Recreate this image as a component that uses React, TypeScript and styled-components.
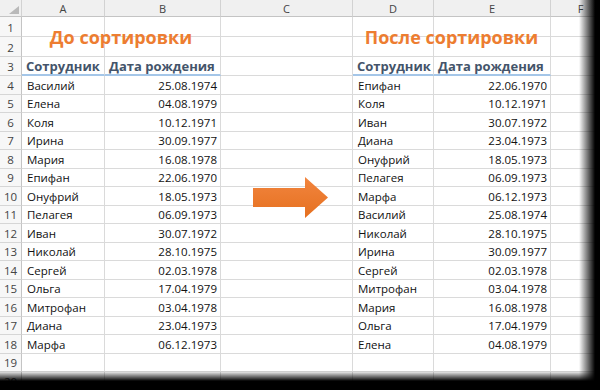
import styled, { createGlobalStyle } from 'styled-components'

type Row = { name: string; date: string }

const before: Row[] = [
  { name: 'Василий', date: '25.08.1974' },
  { name: 'Елена', date: '04.08.1979' },
  { name: 'Коля', date: '10.12.1971' },
  { name: 'Ирина', date: '30.09.1977' },
  { name: 'Мария', date: '16.08.1978' },
  { name: 'Епифан', date: '22.06.1970' },
  { name: 'Онуфрий', date: '18.05.1973' },
  { name: 'Пелагея', date: '06.09.1973' },
  { name: 'Иван', date: '30.07.1972' },
  { name: 'Николай', date: '28.10.1975' },
  { name: 'Сергей', date: '02.03.1978' },
  { name: 'Ольга', date: '17.04.1979' },
  { name: 'Митрофан', date: '03.04.1978' },
  { name: 'Диана', date: '23.04.1973' },
  { name: 'Марфа', date: '06.12.1973' },
]

const after: Row[] = [
  { name: 'Епифан', date: '22.06.1970' },
  { name: 'Коля', date: '10.12.1971' },
  { name: 'Иван', date: '30.07.1972' },
  { name: 'Диана', date: '23.04.1973' },
  { name: 'Онуфрий', date: '18.05.1973' },
  { name: 'Пелагея', date: '06.09.1973' },
  { name: 'Марфа', date: '06.12.1973' },
  { name: 'Василий', date: '25.08.1974' },
  { name: 'Николай', date: '28.10.1975' },
  { name: 'Ирина', date: '30.09.1977' },
  { name: 'Сергей', date: '02.03.1978' },
  { name: 'Митрофан', date: '03.04.1978' },
  { name: 'Мария', date: '16.08.1978' },
  { name: 'Ольга', date: '17.04.1979' },
  { name: 'Елена', date: '04.08.1979' },
]

const letters = ['A', 'B', 'C', 'D', 'E', 'F']

export default function App() {
  return (
    <>
      <GlobalStyle />
      <Frame>
        <Sheet>
          <Corner>
            <svg width="10" height="8" viewBox="0 0 10 8">
              <polygon points="10,0 10,8 0,8" fill="#b9b9b9" />
            </svg>
          </Corner>
          {letters.map((l) => (
            <ColHead key={l}>{l}</ColHead>
          ))}

          <RowHead>1</RowHead>
          <Title $split={82}>До сортировки</Title>
          <Cell />
          <Title $split={80}>После сортировки</Title>
          <Cell />

          <RowHead>2</RowHead>
          <Cell />
          <Cell />

          <RowHead>3</RowHead>
          <HeadCell $accent>Сотрудник</HeadCell>
          <HeadCell $accent>Дата рождения</HeadCell>
          <Cell />
          <HeadCell $accent>Сотрудник</HeadCell>
          <HeadCell $accent>Дата рождения</HeadCell>
          <Cell />

          {before.map((row, i) => (
            <RowLine key={i} n={i + 4} left={row} right={after[i]} />
          ))}

          {[19, 20].map((n) => (
            <RowLine key={n} n={n} />
          ))}
        </Sheet>

        <Arrow width="75" height="41" viewBox="0 0 75 41">
          <defs>
            <linearGradient id="arrowFill" x1="0" y1="0" x2="0" y2="1">
              <stop offset="0" stopColor="#f2853f" />
              <stop offset="1" stopColor="#e5701f" />
            </linearGradient>
          </defs>
          <polygon
            points="0,11 52,11 52,0 75,20.5 52,41 52,30 0,30"
            fill="url(#arrowFill)"
          />
        </Arrow>
        <Shade />
      </Frame>
    </>
  )
}

function RowLine({ n, left, right }: { n: number; left?: Row; right?: Row }) {
  return (
    <>
      <RowHead>{n}</RowHead>
      <Cell>{left?.name}</Cell>
      <Cell $align="right">{left?.date}</Cell>
      <Cell />
      <Cell>{right?.name}</Cell>
      <Cell $align="right">{right?.date}</Cell>
      <Cell />
    </>
  )
}

const GlobalStyle = createGlobalStyle`
  html, body {
    margin: 0;
    padding: 0;
    background: #000;
  }
  body {
    font-family: 'Open Sans', 'Liberation Sans', sans-serif;
  }
`

const Frame = styled.div`
  position: relative;
  width: 600px;
  height: 390px;
  overflow: hidden;
  background: #fff;
`

const Sheet = styled.div`
  display: grid;
  grid-template-columns: 22px 83px 116px 132px 81px 117px 60px;
  grid-template-rows: 17px 20px 20px 19px repeat(17, 18.5px);
  width: 611px;
  background: #fff;
`

const gridLine = '#dadada'

const Cell = styled.div<{ $align?: 'left' | 'right' }>`
  display: flex;
  align-items: center;
  justify-content: ${({ $align }) => ($align === 'right' ? 'flex-end' : 'flex-start')};
  padding: 1px 3px 0 5px;
  box-sizing: border-box;
  border-right: 1px solid ${gridLine};
  border-bottom: 1px solid ${gridLine};
  font-size: 11.5px;
  color: #111;
  white-space: nowrap;
  overflow: hidden;
`

const HeadCell = styled(Cell)<{ $accent?: boolean }>`
  padding-left: 4px;
  font-size: 13px;
  font-weight: 700;
  color: #44546a;
  border-bottom: ${({ $accent }) => ($accent ? '2px solid #a4c6e8' : `1px solid ${gridLine}`)};
`

const Title = styled.div<{ $split: number }>`
  grid-column: span 2;
  grid-row: span 2;
  display: flex;
  align-items: center;
  justify-content: center;
  box-sizing: border-box;
  border-right: 1px solid ${gridLine};
  border-bottom: 1px solid ${gridLine};
  background:
    linear-gradient(${gridLine}, ${gridLine}) ${({ $split }) => $split}px 0 / 1px 100% no-repeat,
    linear-gradient(${gridLine}, ${gridLine}) 0 19px / 100% 1px no-repeat;
  font-size: 18px;
  font-weight: 700;
  color: #ed7d31;
  white-space: nowrap;
  padding-top: 1px;
`

const ColHead = styled.div`
  display: flex;
  align-items: center;
  justify-content: center;
  box-sizing: border-box;
  background: #f0f0f0;
  border-right: 1px solid #d2d2d2;
  border-bottom: 1px solid #c4c4c4;
  font-size: 11px;
  color: #444;
`

const Corner = styled(ColHead)`
  align-items: flex-end;
  justify-content: flex-end;
  padding: 0 2px 2px 0;
`

const RowHead = styled.div`
  display: flex;
  align-items: center;
  justify-content: center;
  box-sizing: border-box;
  background: #f7f7f7;
  border-right: 1px solid #c4c4c4;
  border-bottom: 1px solid #d6d6d6;
  font-size: 11.5px;
  color: #444;
  padding-top: 1px;
`

const Arrow = styled.svg`
  position: absolute;
  left: 253px;
  top: 177px;
`

const Shade = styled.div`
  position: absolute;
  inset: 0;
  pointer-events: none;
  background:
    linear-gradient(to right, rgba(0, 0, 0, 0) 579px, #000 595px),
    linear-gradient(to bottom, rgba(0, 0, 0, 0) 371px, #000 381px);
`
